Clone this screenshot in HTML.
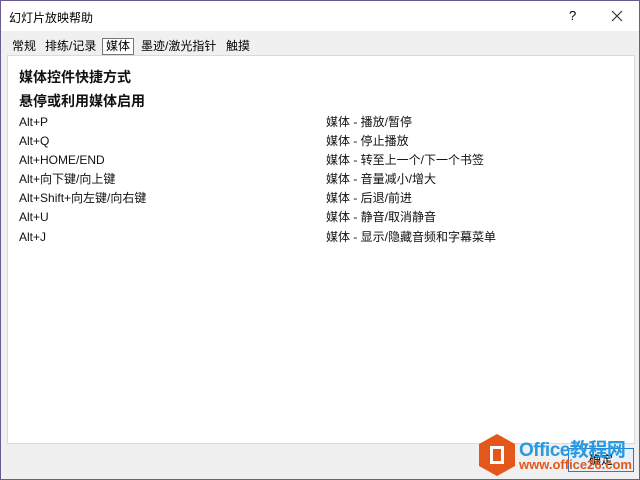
<!DOCTYPE html><html><head><style>
body{margin:0;width:640px;height:480px;overflow:hidden;font-family:"Liberation Sans","Noto Sans CJK SC",sans-serif;}
.win{position:absolute;left:0;top:0;width:638px;height:478px;border:1px solid #6b5b8e;background:#f0f0f0;}
.title{position:absolute;left:0;top:0;width:638px;height:30px;background:#fff;font-size:12px;}
.t{position:absolute;font-size:12px;color:#000;white-space:nowrap}
.tab{position:absolute;top:38px;height:15px;font-size:12px;line-height:15px;padding:0 3px;}
.panel{position:absolute;left:6px;top:54px;width:626px;height:387px;background:#fff;border:1px solid #dadada;}
.r{position:absolute;font-size:12px;line-height:16px;height:16px;white-space:nowrap;color:#111}
</style></head><body>
<div class="win">
<div class="title"><span class="t" style="left:8px;top:8px">幻灯片放映帮助</span>
<span class="t" style="left:568px;top:7px;font-size:13px">?</span>
<svg style="position:absolute;left:610px;top:9px" width="12" height="12"><path d="M1 1L11 11M11 1L1 11" stroke="#333" stroke-width="1.2"/></svg></div>
<div class="tab" style="left:8px">常规</div>
<div class="tab" style="left:41px">排练/记录</div>
<div class="tab" style="left:101px;top:37px;height:15px;border:1px solid #777;background:#fff">媒体</div>
<div class="tab" style="left:137px">墨迹/激光指针</div>
<div class="tab" style="left:222px">触摸</div>
<div class="panel">
<div class="r" style="left:11px;top:13px;font-size:14px;font-weight:bold">媒体控件快捷方式</div>
<div class="r" style="left:11px;top:37px;font-size:14px;font-weight:bold">悬停或利用媒体启用</div>
<div class="r" style="left:11px;top:58px">Alt+P</div><div class="r" style="left:318px;top:58px">媒体 - 播放/暂停</div>
<div class="r" style="left:11px;top:77px">Alt+Q</div><div class="r" style="left:318px;top:77px">媒体 - 停止播放</div>
<div class="r" style="left:11px;top:96px">Alt+HOME/END</div><div class="r" style="left:318px;top:96px">媒体 - 转至上一个/下一个书签</div>
<div class="r" style="left:11px;top:115px">Alt+向下键/向上键</div><div class="r" style="left:318px;top:115px">媒体 - 音量减小/增大</div>
<div class="r" style="left:11px;top:134px">Alt+Shift+向左键/向右键</div><div class="r" style="left:318px;top:134px">媒体 - 后退/前进</div>
<div class="r" style="left:11px;top:153px">Alt+U</div><div class="r" style="left:318px;top:153px">媒体 - 静音/取消静音</div>
<div class="r" style="left:11px;top:173px">Alt+J</div><div class="r" style="left:318px;top:173px">媒体 - 显示/隐藏音频和字幕菜单</div>
</div>
<div style="position:absolute;left:567px;top:447px;width:64px;height:22px;border:1px solid #2a7ad5;background:#e5f1fb;font-size:12px;text-align:center;line-height:22px">确定</div>
<svg style="position:absolute;left:476px;top:432px" width="40" height="44"><polygon points="20,1 38,11 38,33 20,43 2,33 2,11" fill="#e4571b"/><path d="M13 13h14v18h-14z" fill="#fff"/><path d="M16 16h8v12h-8z" fill="#e4571b"/></svg>
<div class="t" style="left:518px;top:434px;font-size:19px;font-weight:bold;color:#2a9ae0;letter-spacing:-0.5px">Office教程网</div>
<div class="t" style="left:518px;top:456px;font-size:13px;font-weight:bold;color:#e4571b">www.office26.com</div>
</div>
</body></html>
